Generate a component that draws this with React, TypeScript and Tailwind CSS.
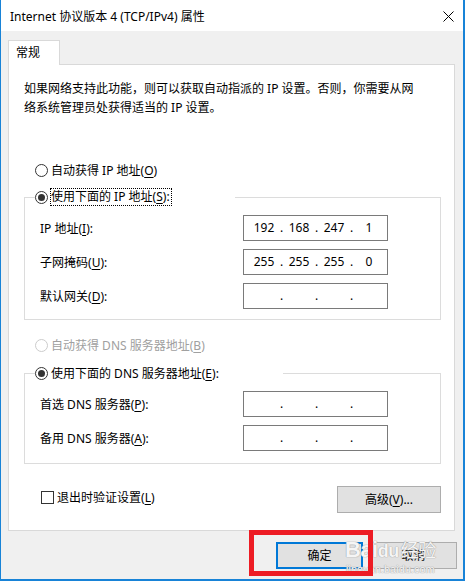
import React from 'react';

const IpBox: React.FC<{ parts?: string[] }> = ({ parts = ['', '', '', ''] }) => (
  <div className="flex items-center w-[145px] h-[26px] border border-[#7a7a7a] bg-white pl-[7px] text-[12px] leading-[16px]">
    {parts.map((p, i) => (
      <React.Fragment key={i}>
        <span className="w-[26px] text-center">{p}</span>
        {i < 3 && <span className="w-[9px] text-center">.</span>}
      </React.Fragment>
    ))}
  </div>
);

const Radio: React.FC<{ checked?: boolean; disabled?: boolean }> = ({ checked, disabled }) => (
  <span
    className={
      disabled
        ? 'w-[13px] h-[13px] shrink-0 rounded-full border border-[#cccccc] bg-white'
        : 'w-[13px] h-[13px] shrink-0 rounded-full border border-[#333333] bg-white flex items-center justify-center'
    }
  >
    {checked && <span className="w-[7px] h-[7px] rounded-full bg-[#333333]" />}
  </span>
);

const Row: React.FC<{ label: React.ReactNode; parts?: string[] }> = ({ label, parts }) => (
  <div className="flex items-center justify-between h-[26px]">
    <span>{label}</span>
    <IpBox parts={parts} />
  </div>
);

const Key: React.FC<{ k: string }> = ({ k }) => (
  <>
    (<span className="underline underline-offset-[2px]">{k}</span>)
  </>
);

export default function App() {
  return (
    <div className="relative w-[465px] h-[581px] flex flex-col bg-[#f0f0f0] border-l border-r-2 border-b-2 border-[#1883d7] text-[12px] leading-[19px] text-black [font-family:'Noto_Sans','Noto_Sans_CJK_SC',sans-serif]">
      {/* title bar */}
      <div className="h-[31px] shrink-0 bg-white flex items-center justify-between pl-[9px] pr-[9px]">
        <span className="pt-[2px]">Internet 协议版本 4 (TCP/IPv4) 属性</span>
        <svg width="11" height="11" viewBox="0 0 11 11" className="mt-[2px]">
          <path d="M0.5 0.5L10.5 10.5M10.5 0.5L0.5 10.5" stroke="#000" strokeWidth="1" />
        </svg>
      </div>

      <div className="flex-1 flex flex-col pt-[9px] pl-[7px]">
        {/* tab */}
        <div className="relative z-10 w-[52px] h-[25px] -mb-[1px] bg-white border-x border-t border-[#d9d9d9] pl-[7px] pt-[2px]">
          常规
        </div>

        {/* tab panel */}
        <div className="w-[447px] bg-white border border-[#d9d9d9] pl-[15px] pr-[13px] pt-[14px] pb-[17px] flex flex-col">
          <p>
            如果网络支持此功能，则可以获取自动指派的 IP 设置。否则，你需要从网
            <br />
            络系统管理员处获得适当的 IP 设置。
          </p>

          <div className="mt-[44px] h-[19px] flex items-center pl-[11px]">
            <Radio />
            <span className="ml-[3px]">
              自动获得 IP 地址<Key k="O" />
            </span>
          </div>

          <fieldset className="mt-[8px] border border-[#dcdcdc] p-0 m-0">
            <legend className="ml-[10px] w-[200px] h-[18px] p-0 flex items-center bg-white">
              <Radio checked />
              <span className="ml-[2px] border border-dotted border-black leading-[16px] pr-[1px]">
                使用下面的 IP 地址<Key k="S" />:
              </span>
            </legend>
            <div className="pl-[15px] pr-[52px] pt-[9px] pb-[10px] flex flex-col gap-[8px]">
              <Row label={<>IP 地址<Key k="I" />:</>} parts={['192', '168', '247', '1']} />
              <Row label={<>子网掩码<Key k="U" />:</>} parts={['255', '255', '255', '0']} />
              <Row label={<>默认网关<Key k="D" />:</>} />
            </div>
          </fieldset>

          <div className="mt-[16px] h-[19px] flex items-center pl-[11px] text-[#a0a0a0]">
            <Radio disabled />
            <span className="ml-[3px]">
              自动获得 DNS 服务器地址<Key k="B" />
            </span>
          </div>

          <fieldset className="mt-[9px] border border-[#dcdcdc] p-0 m-0">
            <legend className="ml-[10px] w-[248px] h-[18px] p-0 flex items-center bg-white">
              <Radio checked />
              <span className="ml-[3px]">
                使用下面的 DNS 服务器地址<Key k="E" />:
              </span>
            </legend>
            <div className="pl-[15px] pr-[52px] pt-[9px] pb-[12px] flex flex-col gap-[8px]">
              <Row label={<>首选 DNS 服务器<Key k="P" />:</>} />
              <Row label={<>备用 DNS 服务器<Key k="A" />:</>} />
            </div>
          </fieldset>

          <div className="mt-[22px] flex items-start justify-between">
            <div className="mt-[2px] ml-[17px] flex items-center">
              <span className="w-[13px] h-[13px] border border-[#333333] bg-white" />
              <span className="ml-[3px]">
                退出时验证设置<Key k="L" />
              </span>
            </div>
            <button className="w-[104px] h-[27px] bg-[#e1e1e1] border border-[#adadad] flex items-center justify-center">
              高级<Key k="V" />...
            </button>
          </div>
        </div>

        {/* dialog buttons */}
        <div className="mt-[11px] flex justify-end gap-[7px] pr-[6px]">
          <button className="w-[87px] h-[27px] bg-[#e1e1e1] border-2 border-[#0078d7] flex items-center justify-center">
            确定
          </button>
          <button className="w-[87px] h-[27px] bg-[#e1e1e1] border border-[#adadad] flex items-center justify-center">
            取消
          </button>
        </div>
      </div>

      {/* baidu watermark */}
      <div className="absolute left-[344px] top-[538px] flex flex-col items-center text-white/90 [text-shadow:0_0_1px_#9a9a9a,0_0_1px_#9a9a9a] pointer-events-none">
        <span className="text-[22px] leading-[24px] font-bold [font-family:'Liberation_Sans','Noto_Sans_CJK_SC',sans-serif] tracking-[-0.5px]">
          Bai<span className="text-[18px]">du</span>
          <span className="text-[18px] font-normal ml-[2px]">经验</span>
        </span>
        <span className="text-[11px] leading-[12px] [font-family:'Liberation_Sans',sans-serif]">jingyan.baidu.com</span>
      </div>

      {/* red annotation */}
      <div className="absolute left-[248px] top-[530px] w-[124px] h-[46px] border-[5px] border-[#ed1c24] pointer-events-none" />
    </div>
  );
}
